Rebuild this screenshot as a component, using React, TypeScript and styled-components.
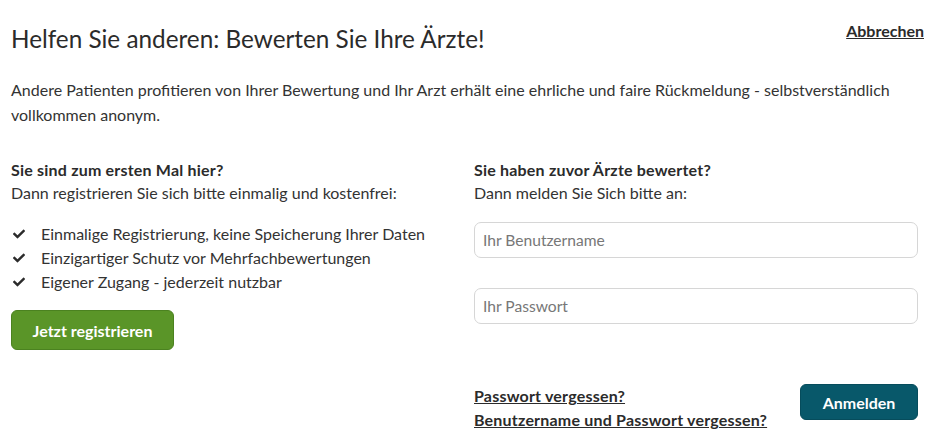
import React from "react";
import styled, { createGlobalStyle } from "styled-components";
import { FaCheck } from "react-icons/fa";

const Global = createGlobalStyle`
  html, body { margin: 0; padding: 0; background: #fff; }
  body { font-family: Lato, "Open Sans", sans-serif; color: #2e2e2e; }
  * { box-sizing: border-box; }
`;

const Page = styled.div`
  padding: 0 20px 0 11px;
  width: 938px;
`;

const Header = styled.div`
  display: flex;
  justify-content: space-between;
  align-items: flex-start;
  padding-top: 20px;
`;

const Title = styled.h1`
  margin: 0;
  font-weight: 400;
  font-size: 24.3px;
  line-height: 34px;
  padding-top: 2px;
  color: #2b2b2b;
`;

const Cancel = styled.a`
  font-weight: 700;
  font-size: 16px;
  color: #2b2b2b;
  text-decoration: underline;
  margin-right: -6px;
  line-height: 18px;
  margin-top: 2px;
`;

const Intro = styled.p`
  margin: 21px 0 0;
  font-size: 16px;
  line-height: 25px;
  color: #333;
`;

const Columns = styled.div`
  display: grid;
  grid-template-columns: 444px 444px;
  column-gap: 19px;
  margin-top: 31px;
`;

const Col = styled.div`
  display: flex;
  flex-direction: column;
`;

const Heading = styled.div`
  font-weight: 700;
  font-size: 16px;
  letter-spacing: 0.2px;
  line-height: 23px;
  color: #2b2b2b;
`;

const Sub = styled.div`
  font-size: 16px;
  line-height: 24px;
  color: #333;
`;

const List = styled.ul`
  list-style: none;
  margin: 17px 0 0;
  padding: 0;
`;

const Item = styled.li`
  display: flex;
  align-items: center;
  gap: 16px;
  font-size: 16px;
  line-height: 24px;
  color: #333;
  padding-left: 2px;
  svg { width: 12px; height: 12px; color: #2b2b2b; }
`;

const Button = styled.button<{ $bg: string; $border: string }>`
  font-family: inherit;
  font-weight: 700;
  font-size: 16px;
  color: #fff;
  background: ${(p) => p.$bg};
  border: 1px solid ${(p) => p.$border};
  border-radius: 6px;
  cursor: pointer;
`;

const RegisterButton = styled(Button)`
  margin-top: 16px;
  width: 163px;
  height: 40px;
  align-self: flex-start;
`;

const Input = styled.input`
  font-family: inherit;
  font-size: 15.6px;
  width: 100%;
  height: 36px;
  border: 1px solid #d6d6d6;
  border-radius: 7px;
  padding: 0 8px;
  color: #333;
  &::placeholder { color: #777; }
`;

const Fields = styled.div`
  display: flex;
  flex-direction: column;
  gap: 30px;
  margin-top: 17px;
`;

const Footer = styled.div`
  display: flex;
  justify-content: space-between;
  align-items: flex-start;
  margin-top: 60px;
`;

const Links = styled.div`
  display: flex;
  flex-direction: column;
  padding-top: 0;
`;

const Link = styled.a`
  font-weight: 700;
  font-size: 16px;
  letter-spacing: 0.2px;
  line-height: 24px;
  color: #2b2b2b;
  text-decoration: underline;
`;

const LoginButton = styled(Button)`
  width: 118px;
  height: 36px;
`;

export default function App() {
  return (
    <Page>
      <Global />
      <Header>
        <Title>Helfen Sie anderen: Bewerten Sie Ihre Ärzte!</Title>
        <Cancel href="#">Abbrechen</Cancel>
      </Header>
      <Intro>
        Andere Patienten profitieren von Ihrer Bewertung und Ihr Arzt erhält eine ehrliche und faire Rückmeldung - selbstverständlich vollkommen anonym.
      </Intro>
      <Columns>
        <Col>
          <Heading>Sie sind zum ersten Mal hier?</Heading>
          <Sub>Dann registrieren Sie sich bitte einmalig und kostenfrei:</Sub>
          <List>
            <Item><FaCheck />Einmalige Registrierung, keine Speicherung Ihrer Daten</Item>
            <Item><FaCheck />Einzigartiger Schutz vor Mehrfachbewertungen</Item>
            <Item><FaCheck />Eigener Zugang - jederzeit nutzbar</Item>
          </List>
          <RegisterButton $bg="#5a9528" $border="#4b8220">Jetzt registrieren</RegisterButton>
        </Col>
        <Col>
          <Heading>Sie haben zuvor Ärzte bewertet?</Heading>
          <Sub>Dann melden Sie Sich bitte an:</Sub>
          <Fields>
            <Input placeholder="Ihr Benutzername" />
            <Input placeholder="Ihr Passwort" type="password" />
          </Fields>
          <Footer>
            <Links>
              <Link href="#">Passwort vergessen?</Link>
              <Link href="#">Benutzername und Passwort vergessen?</Link>
            </Links>
            <LoginButton $bg="#08586a" $border="#064c5c">Anmelden</LoginButton>
          </Footer>
        </Col>
      </Columns>
    </Page>
  );
}
